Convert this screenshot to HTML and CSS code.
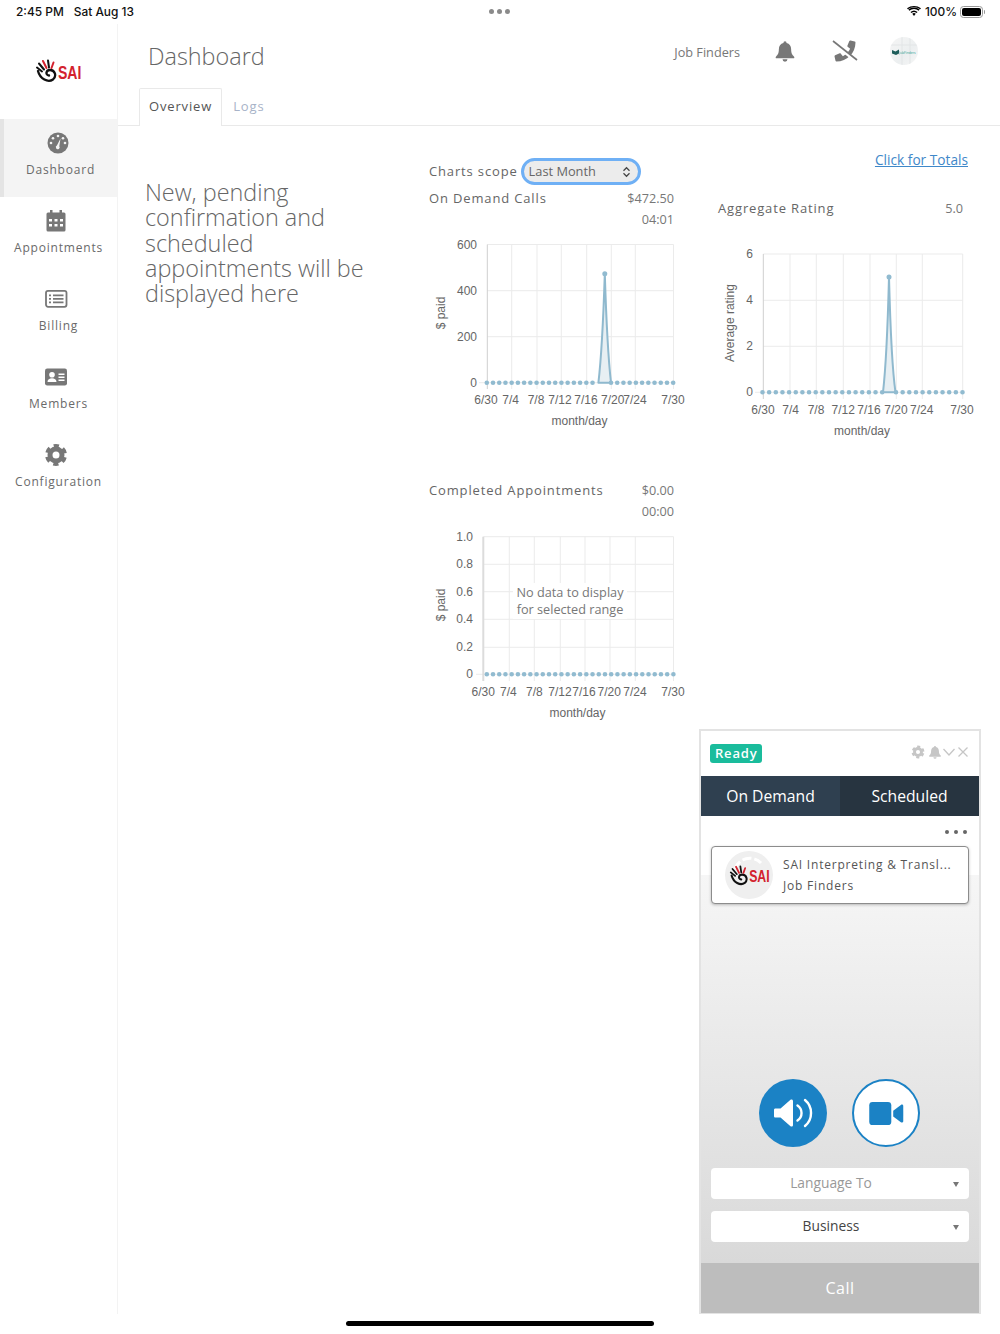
FILE: index.html
```html
<!DOCTYPE html>
<html lang="en">
<head>
<meta charset="utf-8">
<title>Dashboard</title>
<link rel="stylesheet" href="styles.css">
</head>
<body>
<svg class="defs" width="0" height="0" aria-hidden="true">
  <symbol id="logo" viewBox="0 0 48 24">
    <g fill="none" stroke-linecap="round">
      <path d="M3 12C5 20 13 24 18 20.500C22 17 20 11 15 11C11 11 10 16 14 16.500" stroke="#111" stroke-width="2.300"/>
      <path d="M2 8.500L7 12.500M4 4.500L9 10.500M13 1.500L14 8.500" stroke="#111" stroke-width="2"/>
      <path d="M8 2L11.500 9M18.500 3.500L16.500 9" stroke="#d3222e" stroke-width="2"/>
    </g>
  </symbol>
  <symbol id="gear" viewBox="0 0 24 24">
    <circle cx="12" cy="12" r="9.200" fill="none" stroke="currentColor" stroke-width="3.600" stroke-dasharray="5.200 4.430" stroke-dashoffset="17"/>
    <circle cx="12" cy="12" r="6" fill="none" stroke="currentColor" stroke-width="5"/>
  </symbol>
  <symbol id="bell" viewBox="0 0 24 24">
    <path fill="currentColor" d="M12 1.500a1.700 1.700 0 0 0-1.700 1.800C7 4.100 5.300 6.800 5.300 10.200c0 4.500-1.200 6-3 7.700-.4.400-.5.800-.5 1.100 0 .6.400 1 1 1h18.400c.6 0 1-.4 1-1 0-.3-.1-.7-.5-1.100-1.800-1.700-3-3.200-3-7.700 0-3.400-1.700-6.100-5-6.900A1.700 1.700 0 0 0 12 1.500zM9.300 21a2.700 2.700 0 0 0 5.400 0z"/>
  </symbol>
</svg>

<div class="app">
  <header class="status">
    <div class="status-left"><span>2:45 PM</span><span>Sat Aug 13</span></div>
    <div class="status-dots"><i></i><i></i><i></i></div>
    <div class="status-right">
      <svg class="wifi" viewBox="0 0 16 12" width="14" height="11"><path d="M8 11.500l2-2.400a3 3 0 0 0-4 0zM3.900 7l1.200 1.300a4.500 4.500 0 0 1 5.800 0L12.100 7a6.300 6.300 0 0 0-8.200 0zM1.500 4.300l1.200 1.400a8 8 0 0 1 10.600 0l1.200-1.400a10 10 0 0 0-13 0z" transform="translate(0 -.5) "/><path d="M0 2.400l1 1.100a11.500 11.500 0 0 1 14 0l1-1.100a13.500 13.500 0 0 0-16 0z"/></svg>
      <span>100%</span>
      <span class="battery"><b></b></span>
    </div>
  </header>

  <div class="shell">
    <nav class="sidebar">
      <div class="brand">
        <svg class="brand-logo" viewBox="0 0 48 24"><use href="#logo"/><text class="logo-text" transform="translate(23 19.500) scale(.74 1)">SAI</text></svg>
      </div>
      <a class="nav-item active">
        <svg class="nav-icon" viewBox="0 0 24 24"><circle cx="12" cy="12" r="10.500" fill="currentColor"/><g fill="#f4f4f4"><circle cx="12" cy="5" r="1.300"/><circle cx="7" cy="7.300" r="1.300"/><circle cx="17" cy="7.300" r="1.300"/><circle cx="5" cy="12" r="1.300"/><circle cx="19" cy="12" r="1.300"/><path d="M14.500 7.500l-1.200 7.700a1.900 1.900 0 1 1-2.400-.6z"/></g></svg>
        <span>Dashboard</span>
      </a>
      <a class="nav-item">
        <svg class="nav-icon" viewBox="0 0 24 24"><path fill="currentColor" fill-rule="evenodd" d="M6 1h2.500v2.500h7V1H18v2.500h2a1.500 1.500 0 0 1 1.500 1.500v16a1.500 1.500 0 0 1-1.500 1.500H4A1.500 1.500 0 0 1 2.500 21V5A1.500 1.500 0 0 1 4 3.500h2zM5 10v2.500h3V10zm5.500 0v2.500h3V10zm5.500 0v2.500h3V10zM5 15v2.500h3V15zm5.500 0v2.500h3V15zm5.500 0v2.500h3V15z"/></svg>
        <span>Appointments</span>
      </a>
      <a class="nav-item">
        <svg class="nav-icon" viewBox="0 0 24 24"><rect x="2" y="3.800" width="20.500" height="16" rx="2" fill="none" stroke="currentColor" stroke-width="1.800"/><path fill="currentColor" d="M5 7.500h2v1.700H5zM9 7.500h10.500v1.700H9zM5 11h2v1.700H5zM9 11h10.500v1.700H9zM5 14.500h2v1.700H5zM9 14.500h10.500v1.700H9z"/></svg>
        <span>Billing</span>
      </a>
      <a class="nav-item">
        <svg class="nav-icon" viewBox="0 0 24 24"><rect x="1" y="3.500" width="22" height="17" rx="2.200" fill="currentColor"/><g fill="#fff"><circle cx="8" cy="9.800" r="2.800"/><path d="M3.500 17c0-2.500 2-3.700 4.500-3.700s4.500 1.200 4.500 3.700zM14.500 8.500h6V10h-6zM14.500 11.500h6V13h-6zM14.500 14.500h6V16h-6z"/></g></svg>
        <span>Members</span>
      </a>
      <a class="nav-item">
        <svg class="nav-icon"><use href="#gear"/></svg>
        <span>Configuration</span>
      </a>
    </nav>

    <main class="main">
      <div class="topbar">
        <h1>Dashboard</h1>
        <div class="topbar-right">
          <span class="company">Job Finders</span>
          <svg class="top-icon bell-icon"><use href="#bell"/></svg>
          <svg class="top-icon phone-icon" viewBox="0 0 26 26"><path fill="currentColor" transform="translate(2.500 2.500) scale(.041)" d="M493.400 24.600l-104-24c-11.300-2.600-22.900 3.300-27.500 13.900l-48 112c-4.200 9.800-1.400 21.300 6.900 28l60.600 49.600c-36 76.700-98.900 140.500-177.200 177.200l-49.600-60.600c-6.800-8.300-18.200-11.100-28-6.900l-112 48C3.900 366.500-2 378.100.6 389.400l24 104C27.100 504.200 36.700 512 48 512c256.100 0 464-207.500 464-464 0-11.200-7.700-20.900-18.600-23.400z"/><path d="M1 4.500L24 23" stroke="#fff" stroke-width="3.500"/><path d="M1 3L25 22" stroke="currentColor" stroke-width="1.600"/></svg>
          <div class="avatar"><svg viewBox="0 0 28 28" width="28" height="28"><path class="avatar-glass" d="M12 0V28M20 0V28M0 8H28"/><path d="M2 13l3.500 1.500L9 12.500v4l-3 1.500-4-1.500z" fill="#1d5d5a"/><text class="avatar-text" x="9" y="16.500">JobFinders</text></svg></div>
        </div>
      </div>

      <div class="tabs">
        <a class="tab current">Overview</a>
        <a class="tab">Logs</a>
      </div>

      <div class="content">
        <p class="intro">New, pending confirmation and scheduled appointments will be displayed here</p>

        <div class="col-left">
          <div class="scope">
            <label>Charts scope</label>
            <div class="scope-select">
              <span>Last Month</span>
              <svg viewBox="0 0 10 14" width="9" height="12"><path d="M1.500 5.500L5 2l3.500 3.500M1.500 8.500L5 12l3.500-3.500" fill="none" stroke="#444" stroke-width="1.400"/></svg>
            </div>
          </div>

          <section class="card">
            <div class="card-head">
              <h2>On Demand Calls</h2>
              <div class="card-vals"><span>$472.50</span><span>04:01</span></div>
            </div>
            <svg class="chart" viewBox="425 232 270 200" width="270" height="200">
              <g class="gridline"><path d="M487.300 244.500H673.500M487.300 290.700H673.500M487.300 336.700H673.500M479 382.700H673.500M511.700 244.500V389M537 244.500V389M561.300 244.500V389M586.700 244.500V389M611.300 244.500V389M635.300 244.500V389M673.500 244.500V389"/></g>
              <path class="axis" d="M487.300 244.500V389"/>
              <path class="area" d="M598.400 382.700C600.500 365 602.500 345 604.800 273.700C607 345 609 365 611 382.700Z"/>
              <path class="dots" d="M486.800 382.700H598.600M611 382.700H674.500"/>
              <circle class="peak" cx="604.800" cy="273.700" r="2.500"/>
              <g class="tick-y"><text x="477" y="248.500">600</text><text x="477" y="294.700">400</text><text x="477" y="340.700">200</text><text x="477" y="386.700">0</text></g>
              <g class="tick-x"><text x="486" y="404">6/30</text><text x="510.700" y="404">7/4</text><text x="536" y="404">7/8</text><text x="560" y="404">7/12</text><text x="586" y="404">7/16</text><text x="612.700" y="404">7/20</text><text x="635" y="404">7/24</text><text x="673" y="404">7/30</text><text x="579.500" y="425">month/day</text></g>
              <text class="axis-title" transform="translate(445 313) rotate(-90)">$ paid</text>
            </svg>
          </section>

          <section class="card card-next">
            <div class="card-head">
              <h2>Completed Appointments</h2>
              <div class="card-vals"><span>$0.00</span><span>00:00</span></div>
            </div>
            <div class="chart-wrap">
              <svg class="chart" viewBox="425 524 270 200" width="270" height="200">
                <g class="gridline"><path d="M483.300 536.700H673.500M483.300 564.300H673.500M483.300 591.700H673.500M483.300 619.300H673.500M483.300 647.300H673.500M476 674.300H673.500M509.300 536.700V681M534.300 536.700V681M560.300 536.700V681M585 536.700V681M610 536.700V681M635.300 536.700V681M673.500 536.700V681"/></g>
                <path class="axis axis-bold" d="M483.300 536.700V681"/>
                <path class="dots" d="M486.800 674.300H674.500"/>
                <g class="tick-y"><text x="473" y="540.700">1.0</text><text x="473" y="568.300">0.8</text><text x="473" y="595.700">0.6</text><text x="473" y="623.300">0.4</text><text x="473" y="651.300">0.2</text><text x="473" y="678.300">0</text></g>
                <g class="tick-x"><text x="483.300" y="696">6/30</text><text x="508.300" y="696">7/4</text><text x="534.300" y="696">7/8</text><text x="560" y="696">7/12</text><text x="584" y="696">7/16</text><text x="609.300" y="696">7/20</text><text x="635" y="696">7/24</text><text x="673" y="696">7/30</text><text x="577.500" y="717">month/day</text></g>
                <text class="axis-title" transform="translate(445 605) rotate(-90)">$ paid</text>
              </svg>
              <div class="no-data">No data to display<br>for selected range</div>
            </div>
          </section>
        </div>

        <div class="col-right">
          <a class="totals">Click for Totals</a>
          <section class="card card-rating">
            <div class="card-head">
              <h2>Aggregate Rating</h2>
              <div class="card-vals"><span>5.0</span></div>
            </div>
            <svg class="chart" viewBox="715 242 270 200" width="270" height="200">
              <g class="gridline"><path d="M763.300 254H962.700M763.300 300.300H962.700M763.300 346.300H962.700M755 392.300H962.700M790 254V399M816.300 254V399M843.300 254V399M870 254V399M896.300 254V399M922.300 254V399M962.700 254V399"/></g>
              <path class="axis" d="M763.300 254V399"/>
              <path class="area" d="M883 392.300C885 375 887 355 889 277C891 355 893 375 895.500 392.300Z"/>
              <path class="dots dots-wide" d="M762.500 392.300H883.500M896 392.300H963.500"/>
              <circle class="peak" cx="889" cy="277" r="2.500"/>
              <g class="tick-y"><text x="753" y="258">6</text><text x="753" y="304.300">4</text><text x="753" y="350.300">2</text><text x="753" y="396.300">0</text></g>
              <g class="tick-x"><text x="763" y="414">6/30</text><text x="790.700" y="414">7/4</text><text x="816" y="414">7/8</text><text x="843.300" y="414">7/12</text><text x="869" y="414">7/16</text><text x="896" y="414">7/20</text><text x="921.700" y="414">7/24</text><text x="962" y="414">7/30</text><text x="862" y="435">month/day</text></g>
              <text class="axis-title" transform="translate(734 323) rotate(-90)">Average rating</text>
            </svg>
          </section>
        </div>
      </div>
    </main>
  </div>

  <aside class="phone">
    <div class="phone-head">
      <span class="ready">Ready</span>
      <div class="phone-tools">
        <svg class="tool-gear"><use href="#gear"/></svg>
        <svg><use href="#bell"/></svg>
        <svg viewBox="0 0 14 14"><path d="M1.500 4L7 10l5.500-6" fill="none" stroke="currentColor" stroke-width="1.300"/></svg>
        <svg viewBox="0 0 14 14"><path d="M2.500 2.500l9 9M11.500 2.500l-9 9" fill="none" stroke="currentColor" stroke-width="1.300"/></svg>
      </div>
    </div>
    <div class="phone-tabs">
      <a class="phone-tab on">On Demand</a>
      <a class="phone-tab">Scheduled</a>
    </div>
    <div class="phone-body">
      <div class="more"><i></i><i></i><i></i></div>
      <div class="contact">
        <div class="contact-logo">
          <svg viewBox="0 0 48 48" width="48" height="48">
            <circle cx="24" cy="24" r="24" fill="#efefef"/>
            <path class="ring" d="M10 18A15.500 15.500 0 0 1 36 12" stroke-dasharray="9 3"/>
            <svg x="4" y="14" width="42" height="21" viewBox="0 0 48 24"><use href="#logo"/><text class="logo-text" transform="translate(23 19.500) scale(.74 1)">SAI</text></svg>
          </svg>
        </div>
        <div class="contact-text">
          <span>SAI Interpreting &amp; Transl...</span>
          <span>Job Finders</span>
        </div>
      </div>
      <div class="call-types">
        <button class="round solid" type="button">
          <svg viewBox="0 0 40 40" width="40" height="40"><path fill="#fff" d="M2.500 15.500h5L17.500 6.800c1-.8 2.500-.3 2.500 1.200v24c0 1.500-1.500 2-2.500 1.200L7.500 24.500h-5c-1 0-1.500-.5-1.500-1.500v-6c0-1 .5-1.500 1.500-1.500z"/><g fill="none" stroke="#fff" stroke-width="2.400" stroke-linecap="round"><path d="M24.500 12.500a9 9 0 0 1 0 15"/><path d="M32 7a17 17 0 0 1 0 26"/></g></svg>
        </button>
        <button class="round outline" type="button">
          <svg viewBox="0 0 36 24" width="35" height="23"><rect x="0" y="0" width="23" height="24" rx="3.500" fill="#1b82c5"/><path fill="#1b82c5" d="M25 9l8-6c1.300-.9 2.500-.2 2.500 1.200v15.600c0 1.400-1.200 2.100-2.500 1.200l-8-6z"/></svg>
        </button>
      </div>
      <div class="pick muted"><span>Language To</span><i></i></div>
      <div class="pick"><span>Business</span><i></i></div>
    </div>
    <div class="call">Call</div>
  </aside>

  <div class="home-bar"></div>
</div>
</body>
</html>
```
FILE: styles.css
```css
* { box-sizing: border-box; }
html, body { margin: 0; padding: 0; background: #fff; }
body { font-family: "Open Sans", "Liberation Sans", sans-serif; color: #666; }
.defs { position: absolute; }
.app { position: relative; width: 1000px; height: 1334px; overflow: hidden; display: flex; flex-direction: column; }

/* status bar */
.status { height: 24px; flex: none; display: grid; grid-template-columns: 1fr auto 1fr; align-items: center; padding: 0 17px 1px 16px; font: 500 11.9px "Inter", "Liberation Sans", sans-serif; color: #111; }
.status-left { display: flex; gap: 10px; }
.status-dots { display: flex; gap: 3px; }
.status-dots i { width: 5px; height: 5px; border-radius: 50%; background: #8a8a8a; }
.status-right { display: flex; justify-content: flex-end; align-items: center; gap: 4px; }
.wifi { fill: #000; }
.battery { position: relative; width: 23px; height: 12px; border: 1px solid #999; border-radius: 3.5px; padding: 1px; margin-left: -1px; }
.battery b { display: block; height: 100%; background: #000; border-radius: 2px; }
.battery::after { content: ""; position: absolute; right: -3px; top: 3px; width: 1.500px; height: 4px; background: #999; border-radius: 0 1px 1px 0; }

/* shell */
.shell { flex: none; height: 1290px; display: flex; }
.sidebar { flex: none; width: 118px; border-right: 1px solid #f3f3f3; }
.brand { height: 95px; display: flex; align-items: center; justify-content: center; }
.brand-logo { width: 48px; height: 24px; margin-top: -2px; }
.nav-item { height: 78px; padding-top: 12px; display: flex; flex-direction: column; align-items: center; color: #6a6a6a; font-size: 12px; letter-spacing: .8px; line-height: 18px; }
.nav-item span { margin-top: 6px; }
.nav-item.active { background: #f4f4f4; border-left: 4px solid #e4e4e4; }
.nav-icon { width: 24px; height: 24px; margin-right: 6px; flex: none; color: #777; }

.main { flex: 1; min-width: 0; display: flex; flex-direction: column; }
.topbar { height: 64px; flex: none; display: flex; align-items: center; padding-left: 30px; }
h1 { margin: 0; font-size: 23.400px; font-weight: 300; line-height: 32px; color: #666; }
.topbar-right { margin-left: auto; display: flex; align-items: center; padding-right: 82px; padding-bottom: 8px; }
.company { font-size: 12.700px; color: #777; margin-right: 34px; }
.top-icon { color: #777; flex: none; margin-top: -2px; }
.bell-icon { width: 22px; height: 22px; margin-right: 36px; }
.phone-icon { width: 26px; height: 26px; margin-right: 32px; }
.avatar { width: 28px; height: 28px; border-radius: 50%; margin-top: -2px; background: linear-gradient(135deg, #f5f5f5, #eceff0 60%, #f6f6f6); overflow: hidden; }
.avatar-glass { fill: none; stroke: #e2e5e6; stroke-width: 1; }
.avatar-text { font: 3.400px "Open Sans", sans-serif; fill: #2a9d8f; }

.tabs { height: 38px; flex: none; display: flex; padding-left: 21px; border-bottom: 1px solid #e9e9e9; font-size: 13px; letter-spacing: .85px; line-height: 34px; }
.tab { padding: 0 9px; color: #a8b3c8; height: 38px; border: 1px solid transparent; border-bottom: 0; margin-left: 1px; }
.tab.current { color: #555; font-weight: 500; background: #fff; border-color: #e9e9e9; margin: 0; border-radius: 2px 2px 0 0; }

.content { flex: 1; display: flex; padding: 24px 0 0 27px; }
.intro { width: 284px; flex: none; margin: 30px 0 0; padding-right: 55px; font-size: 23.400px; font-weight: 300; line-height: 25.300px; color: #666; }
.col-left { width: 245px; flex: none; padding-top: 8px; }
.col-right { width: 250px; flex: none; margin-left: 44px; text-align: right; }
.scope { height: 27px; display: flex; align-items: center; gap: 3px; font-size: 13px; letter-spacing: .85px; color: #666; }
.scope label { white-space: nowrap; margin-top: -2px; }
.scope-select { flex: none; width: 120px; height: 27px; display: flex; align-items: center; justify-content: space-between; padding: 0 7px 0 5px; background: #ececec; border: 3px solid #6fb0f5; border-radius: 14px; font-size: 12.800px; letter-spacing: 0; color: #666; }
.scope-select span { margin-top: -2px; }
.card { margin-top: 3px; text-align: left; }
.card-next { margin-top: 48px; }
.card-rating { margin-top: 28px; }
.card-head { height: 42px; display: flex; justify-content: space-between; margin-bottom: 2px; }
.card-rating .card-head { padding-right: 5px; }
h2 { margin: 0; font-size: 13px; font-weight: 500; letter-spacing: .85px; line-height: 21px; color: #666; }
.card-vals { display: flex; flex-direction: column; align-items: flex-end; font-size: 12.700px; line-height: 21px; color: #777; }
.totals { font-size: 13.700px; line-height: 20px; color: #3f88c9; text-decoration: underline; display: block; }

.chart { display: block; margin-left: -4px; overflow: visible; }
.card-rating .chart { margin-left: -3px; }
.chart-wrap { position: relative; }
.gridline path { fill: none; stroke: #ebebeb; stroke-width: 1; }
.axis { fill: none; stroke: #cfcfcf; stroke-width: 1; }
.axis-bold { stroke: #dcdcdc; stroke-width: 2; }
.area { fill: #e7eff3; stroke: #8fb9ce; stroke-width: 2; stroke-linejoin: round; }
.dots { fill: none; stroke: #91bbd0; stroke-width: 4.600; stroke-linecap: round; stroke-dasharray: 0 6.220; }
.dots-wide { stroke-dasharray: 0 6.650; }
.peak { fill: #91bbd0; }
.chart text { font-family: "Liberation Sans", Arial, sans-serif; font-size: 12px; fill: #666; }
.tick-y text { text-anchor: end; }
.tick-x text { text-anchor: middle; }
.axis-title { text-anchor: middle; }
.no-data { position: absolute; left: 84px; top: 59px; width: 114px; background: #fff; text-align: center; font-size: 12.700px; line-height: 17px; color: #777; padding: 1px 0; white-space: nowrap; }

.logo-text { font: bold 19px "Liberation Sans", sans-serif; fill: #d3222e; }

/* softphone */
.phone { position: absolute; left: 699px; top: 729px; width: 282px; height: 585px; display: flex; flex-direction: column; border: 2px solid #e3e3e3; border-bottom-width: 1px; background: #fff; }
.phone-head { height: 45px; flex: none; display: flex; align-items: center; justify-content: space-between; padding: 0 9px 1px; }
.ready { background: #1abc9c; color: #fff; border-radius: 3px; font-size: 13px; font-weight: 600; letter-spacing: .8px; line-height: 19px; height: 19px; padding: 0 5px; }
.phone-tools { display: flex; align-items: center; color: #c6c6c6; margin-top: -2px; }
.phone-tools svg { width: 14px; height: 14px; }
.phone-tools .tool-gear { margin-right: 3px; }
.phone-tabs { height: 40px; flex: none; display: flex; }
.phone-tab { flex: 1; background: #273440; color: #fff; font-size: 15.700px; line-height: 40px; text-align: center; }
.phone-tab.on { background: #2f4050; }
.phone-body { flex: 1; display: flex; flex-direction: column; padding: 0 10px 21px; background: linear-gradient(#fff 59px, #f6f6f6 59px, #d9d9d9 100%); }
.more { height: 30px; flex: none; display: flex; justify-content: flex-end; gap: 5px; padding: 14px 2px 0 0; }
.more i { width: 4px; height: 4px; border-radius: 50%; background: #666; }
.contact { height: 58px; flex: none; display: flex; align-items: center; background: #fff; border: 1px solid #8c8c8c; border-radius: 4px; box-shadow: 0 1px 3px rgba(0,0,0,.25); padding-left: 13px; }
.contact-logo { width: 48px; height: 48px; flex: none; }
.ring { fill: none; stroke: #fff; stroke-width: 3; }
.contact-text { margin-left: 10px; display: flex; flex-direction: column; font-size: 12px; letter-spacing: .8px; line-height: 21px; color: #555; white-space: nowrap; }
.call-types { margin-top: auto; display: flex; justify-content: center; gap: 25px; margin-bottom: 21px; margin-right: 1px; }
.round { width: 68px; height: 68px; border-radius: 50%; padding: 0; display: flex; align-items: center; justify-content: center; }
.round.solid { background: #1b82c5; border: 0; }
.round.outline { background: #fff; border: 2px solid #1b82c5; }
.pick { position: relative; height: 31px; flex: none; background: #fff; border-radius: 4px; text-align: center; font-size: 13.800px; line-height: 29px; color: #444; padding-right: 18px; }
.pick + .pick { margin-top: 12px; }
.pick.muted { color: #999; }
.pick i { position: absolute; right: 10px; top: 14px; border-left: 3px solid transparent; border-right: 3px solid transparent; border-top: 5px solid #777; }
.call { height: 50px; flex: none; background: #bdbdbd; color: #fff; font-size: 16px; line-height: 50px; text-align: center; letter-spacing: .5px; }

.home-bar { position: absolute; left: 346px; top: 1321px; width: 308px; height: 5px; border-radius: 3px; background: #000; }
```
